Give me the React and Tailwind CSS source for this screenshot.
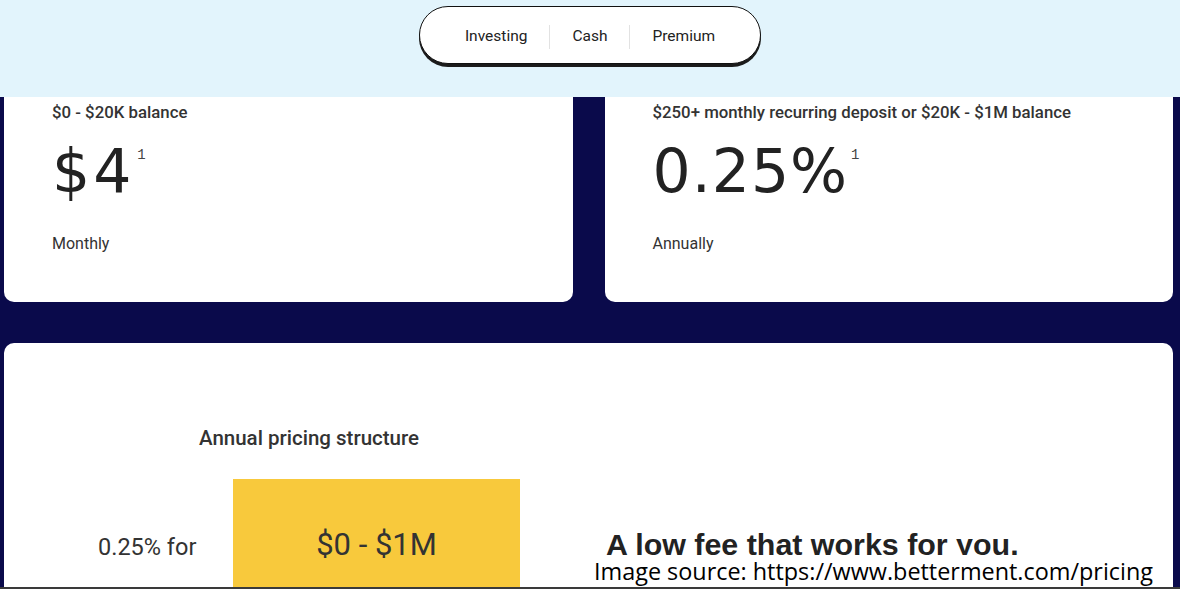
const NAV_ITEMS = ["Investing", "Cash", "Premium"];

const TIERS = [
  {
    label: "$0 - $20K balance",
    price: "$4",
    period: "Monthly",
    priceClass: "tracking-[3px]",
    supGap: "ml-[3px]",
  },
  {
    label: "$250+ monthly recurring deposit or $20K - $1M balance",
    price: "0.25%",
    period: "Annually",
    priceClass: "tracking-[1px]",
    supGap: "ml-[3px]",
  },
];

function NavPill() {
  return (
    <div className="flex h-[58px] items-center rounded-full border-[1.5px] border-[#111] bg-white px-[23px] pt-[4px] shadow-[0_3px_0_#1b1b1b]">
      {NAV_ITEMS.map((item, i) => (
        <div key={item} className="flex items-center">
          {i > 0 && <div className="h-[24px] w-px bg-[#e2e2e2]" />}
          <span className="px-[22px] font-['Roboto',sans-serif] text-[15.5px] text-[#222]">{item}</span>
        </div>
      ))}
    </div>
  );
}

function TierCard({ tier }) {
  return (
    <div className="rounded-b-[10px] bg-white px-12 pt-[4px] pb-[47px] font-['Roboto',sans-serif]">
      <p className="text-[16.8px] leading-[22px] font-medium text-[#333]">{tier.label}</p>
      <div className="mt-[18px] flex items-start">
        <span className={`font-['DejaVu_Sans',sans-serif] text-[60px] leading-[60px] ${tier.priceClass} text-[#222]`}>
          {tier.price}
        </span>
        <span className={`mt-[7px] ${tier.supGap} font-['Liberation_Mono',monospace] text-[14px] leading-[14px] text-[#444]`}>
          1
        </span>
      </div>
      <p className="mt-[32px] text-[16px] leading-[22px] text-[#333]">{tier.period}</p>
    </div>
  );
}

export default function App() {
  return (
    <div className="relative h-[589px] w-[1180px] overflow-hidden bg-[#0a0a4b]">
      <header className="flex h-[97px] justify-center bg-[#e2f4fc] pt-[6px]">
        <NavPill />
      </header>

      <div className="grid grid-cols-2 gap-[32px] pr-[7px] pl-[4px]">
        {TIERS.map((tier) => (
          <TierCard key={tier.price} tier={tier} />
        ))}
      </div>

      <div className="mt-[41px] mr-[7px] ml-[4px] flex h-[260px] items-start rounded-t-[10px] bg-white pl-[94px] font-['Roboto',sans-serif]">
        <div className="flex w-[422px] flex-col pt-[82px]">
          <h3 className="text-center text-[20.5px] leading-[26px] font-medium text-[#333]">Annual pricing structure</h3>
          <div className="mt-[28px] flex items-start">
            <span className="mt-[53px] w-[135px] text-[23.5px] leading-[30px] text-[#333]">0.25% for</span>
            <div className="flex h-[140px] w-[287px] justify-center bg-[#f8c93c] pt-[46px]">
              <span className="text-[31px] leading-[40px] text-[#333]">$0 - $1M</span>
            </div>
          </div>
        </div>
        <h2 className="mt-[183px] ml-[86px] font-['Liberation_Sans',sans-serif] text-[30.4px] leading-[36px] font-bold whitespace-nowrap text-[#222]">
          A low fee that works for you.
        </h2>
      </div>

      <div className="absolute bottom-0 left-0 h-[2px] w-full bg-[#3a3a3a]" />
      <div className="absolute top-[555px] left-[588px] h-[32px] w-[569px] bg-white pl-[6px] font-['Open_Sans',sans-serif] text-[23.4px] leading-[32px] whitespace-nowrap text-black">
        Image source: https://www.betterment.com/pricing
      </div>
    </div>
  );
}
